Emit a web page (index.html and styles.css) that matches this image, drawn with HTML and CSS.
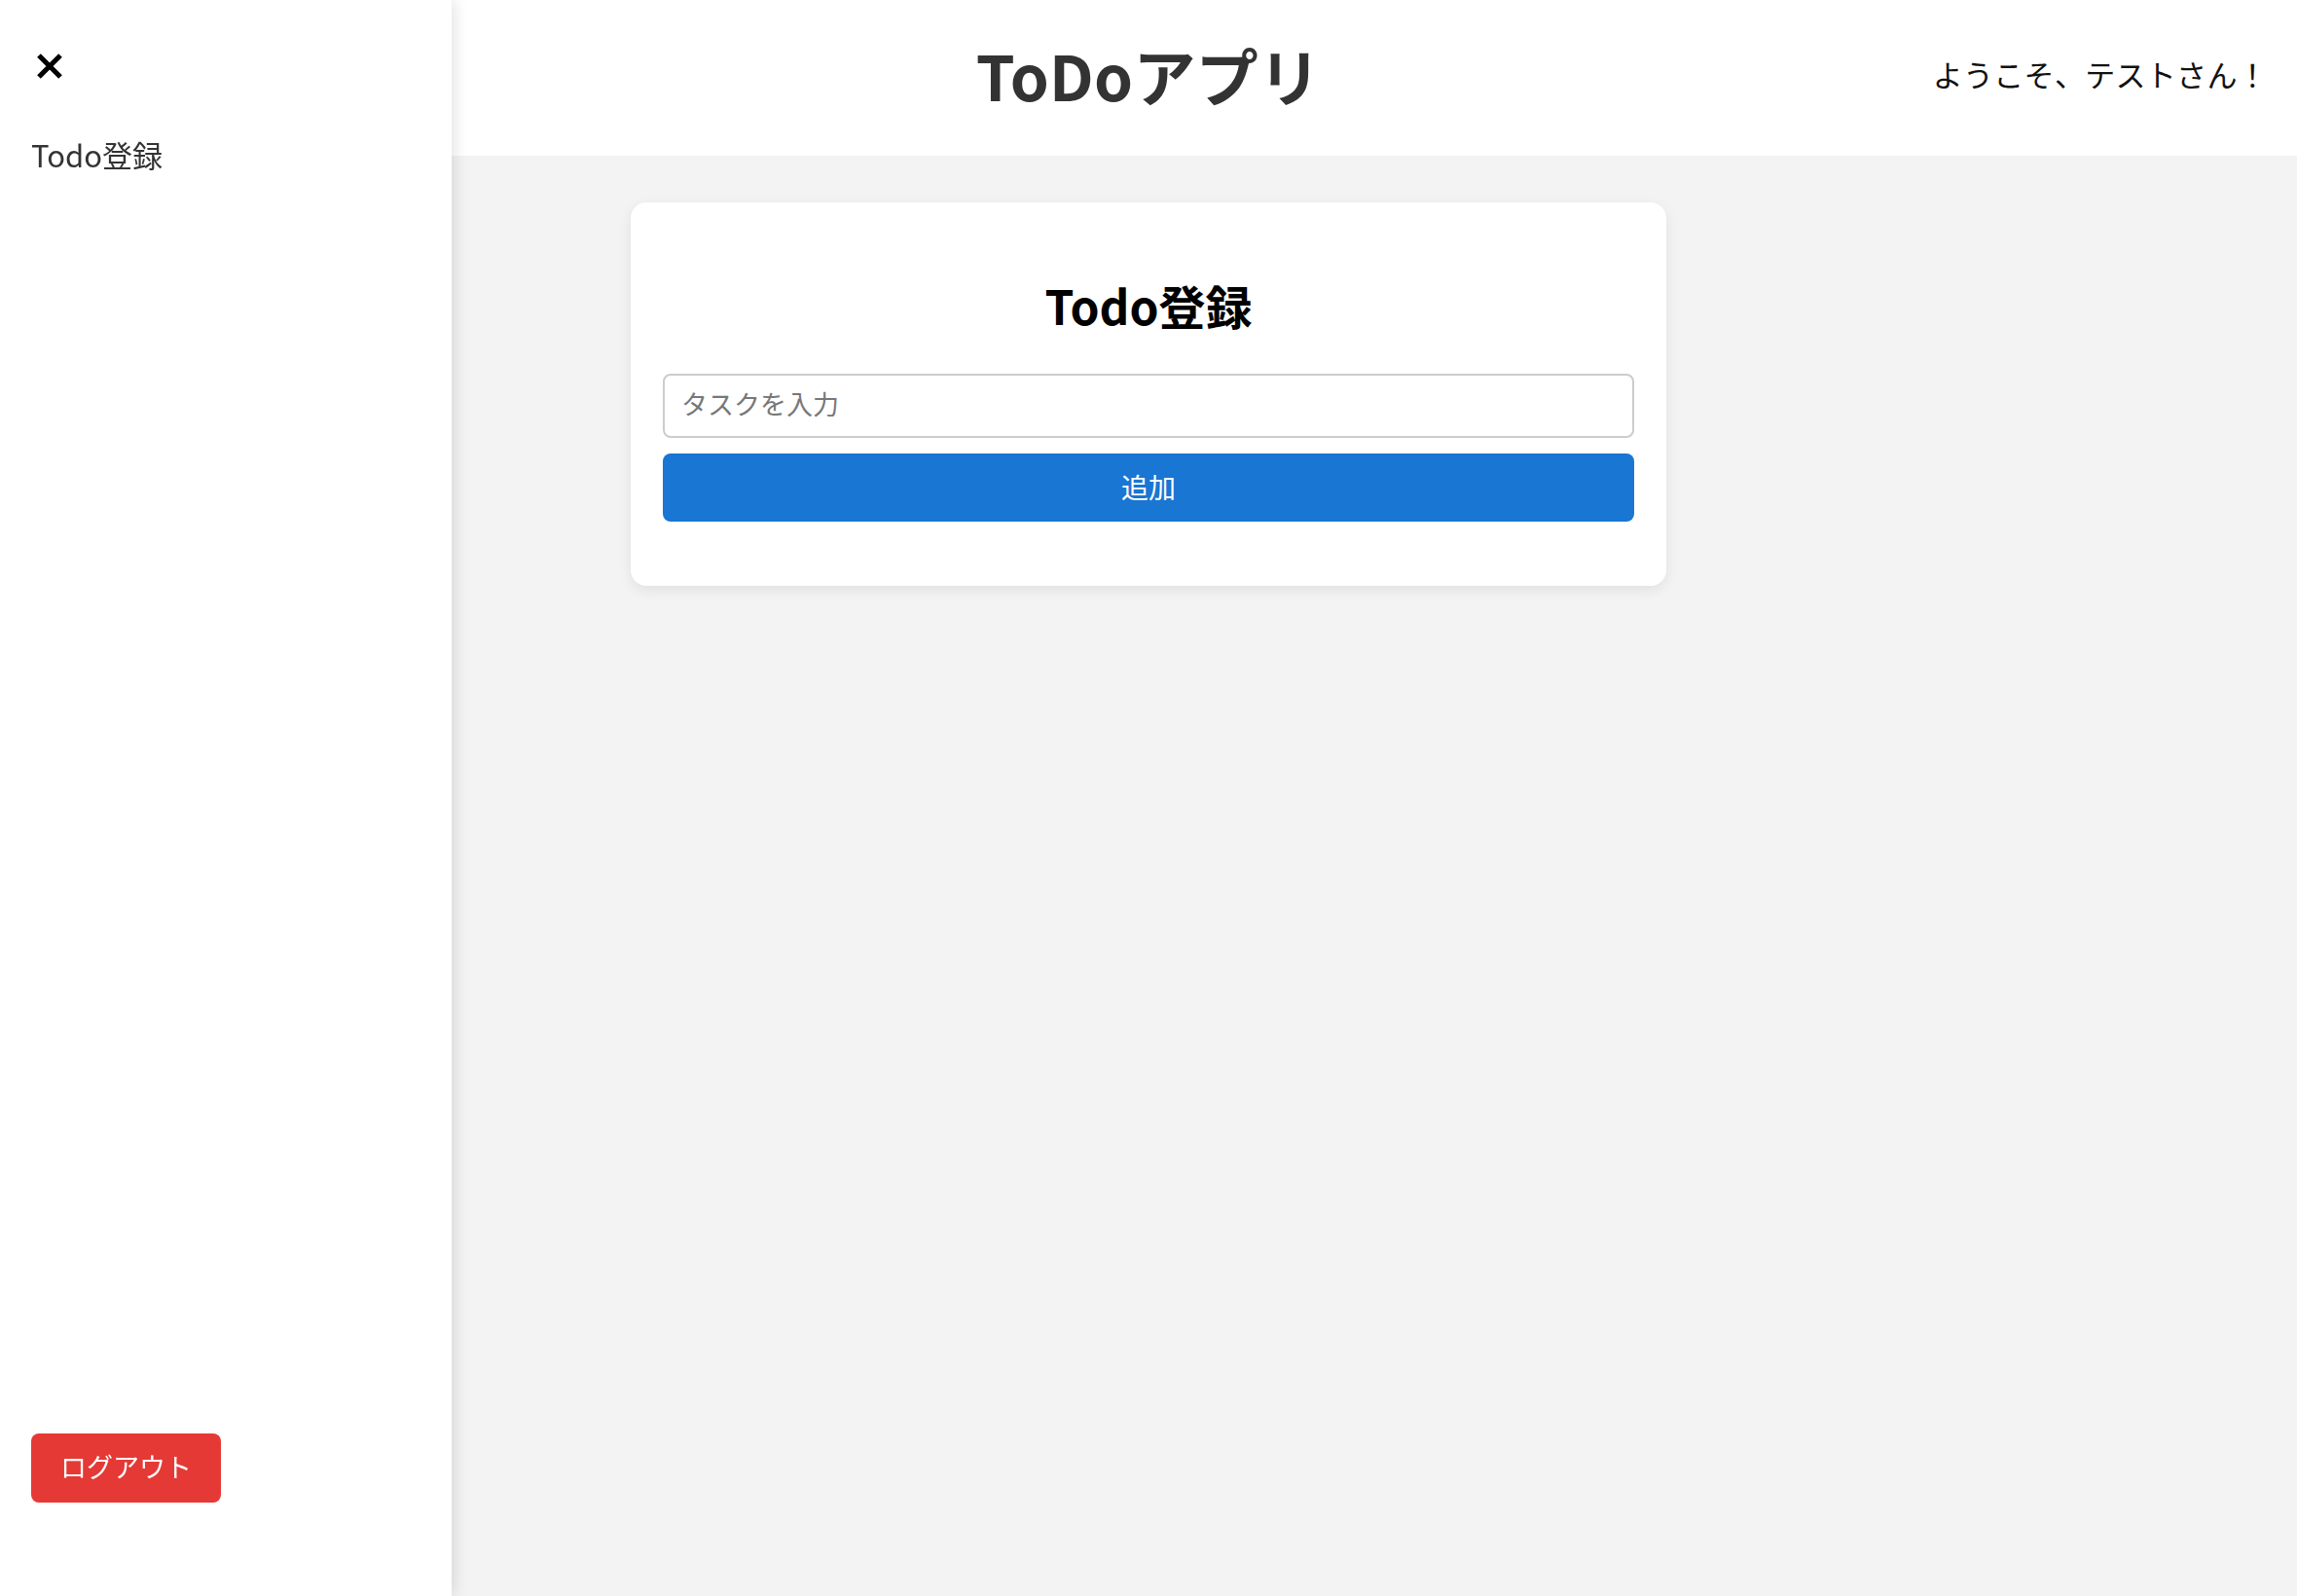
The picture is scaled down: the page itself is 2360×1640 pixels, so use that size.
FILE: index.html
```html
<!DOCTYPE html>
<html lang="ja">
<head>
<meta charset="utf-8">
<title>ToDoアプリ</title>
<link rel="stylesheet" href="styles.css">
</head>
<body>
<div class="app">
  <header class="topbar">
    <div class="topbar-side"></div>
    <h1 class="app-title">ToDoアプリ</h1>
    <div class="topbar-side topbar-right">
      <span class="welcome">ようこそ、テストさん！</span>
    </div>
  </header>
  <main class="content">
    <section class="card">
      <h2 class="card-title">Todo登録</h2>
      <form class="todo-form">
        <input class="task-input" type="text" placeholder="タスクを入力">
        <button class="add-btn" type="button">追加</button>
      </form>
    </section>
  </main>
  <aside class="drawer">
    <button class="close-btn" type="button" aria-label="閉じる">
      <svg width="28" height="28" viewBox="0 0 28 28">
        <path d="M3 3 L25 25 M25 3 L3 25" stroke="#000" stroke-width="5.2" stroke-linecap="butt" fill="none"/>
      </svg>
    </button>
    <nav class="drawer-nav">
      <a class="drawer-link" href="#">Todo登録</a>
    </nav>
    <div class="drawer-footer">
      <button class="logout-btn" type="button">ログアウト</button>
    </div>
  </aside>
</div>
</body>
</html>
```

FILE: styles.css
```css
html, body {
  margin: 0;
  padding: 0;
}

body {
  font-family: "Noto Sans CJK JP", "Noto Sans", sans-serif;
  background: #f3f3f3;
  color: #000;
}

.app {
  min-height: 100vh;
  display: flex;
  flex-direction: column;
}

.topbar {
  height: 160px;
  box-sizing: border-box;
  padding-bottom: 9px;
  background: #fff;
  display: grid;
  grid-template-columns: 1fr auto 1fr;
  align-items: center;
}

.app-title {
  margin: 0;
  font-size: 64px;
  font-weight: 700;
  color: #333;
  line-height: 1;
  letter-spacing: 0.3px;
}

.topbar-right {
  display: flex;
  justify-content: flex-end;
  padding-right: 30px;
}

.welcome {
  font-size: 31px;
  color: #111;
  letter-spacing: 0.3px;
}

.content {
  flex: 1;
  background: #f3f3f3;
  padding-top: 48px;
}

.card {
  width: 1064px;
  box-sizing: border-box;
  margin: 0 auto;
  background: #fff;
  border-radius: 16px;
  box-shadow: 0 4px 14px rgba(0, 0, 0, 0.08);
  padding: 32px 33px 66px;
}

.card-title {
  margin: 45px 0 43px;
  text-align: center;
  font-size: 48px;
  line-height: 56px;
  font-weight: 700;
  color: #000;
}

.todo-form {
  display: flex;
  flex-direction: column;
  gap: 16px;
}

.task-input {
  box-sizing: border-box;
  height: 66px;
  width: 100%;
  border: 2px solid #ccc;
  border-radius: 8px;
  padding: 0 17px 5px;
  font-family: inherit;
  font-size: 27px;
  color: #000;
  outline: none;
}

.task-input::placeholder {
  color: #777;
}

.add-btn {
  height: 70px;
  width: 100%;
  border: none;
  border-radius: 8px;
  background: #1976d2;
  color: #fff;
  font-family: inherit;
  font-size: 28px;
  padding: 0 0 3px;
  cursor: pointer;
}

.drawer {
  position: fixed;
  top: 0;
  left: 0;
  bottom: 0;
  width: 464px;
  box-sizing: border-box;
  background: #fff;
  box-shadow: 4px 0 14px rgba(0, 0, 0, 0.1);
  display: flex;
  flex-direction: column;
  padding: 54px 32px 96px;
}

.close-btn {
  align-self: flex-start;
  margin-left: 5px;
  padding: 0;
  border: none;
  background: none;
  width: 28px;
  height: 28px;
  cursor: pointer;
}

.close-btn svg {
  display: block;
}

.drawer-nav {
  margin-top: 57px;
  flex: 1;
}

.drawer-link {
  font-size: 31px;
  color: #333;
  text-decoration: none;
  line-height: 40px;
}

.logout-btn {
  height: 71px;
  padding: 0 30px 4px;
  border: none;
  border-radius: 8px;
  background: #e53935;
  color: #fff;
  font-family: inherit;
  font-size: 27px;
  cursor: pointer;
}
```
